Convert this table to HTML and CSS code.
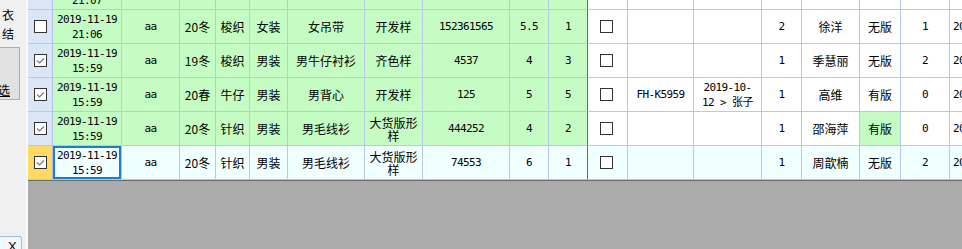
FILE: index.html
```html
<!DOCTYPE html>
<html lang="zh">
<head>
<meta charset="utf-8">
<title>grid</title>
<link rel="stylesheet" href="styles.css">
</head>
<body>
<div class="app">
  <aside class="side">
    <div class="lbl l1">衣</div>
    <div class="lbl l2">结</div>
    <div class="btn"><u>选</u></div>
    <div class="closebox">X</div>
  </aside>
  <div class="viewport">
    <div class="grid">
      <div class="row g">
        <div class="cell rh"></div>
        <div class="cell c1 m">2019-11-19<br>21:07</div>
        <div class="cell c2 m">aa</div>
        <div class="cell c3">20冬</div>
        <div class="cell c4">梭织</div>
        <div class="cell c5">女装</div>
        <div class="cell c6">女吊带</div>
        <div class="cell c7">开发样</div>
        <div class="cell c8 m">1523615</div>
        <div class="cell c9 m">5</div>
        <div class="cell c10 m fz">1</div>
        <div class="cell c11 w"></div>
        <div class="cell c12 w"></div>
        <div class="cell c13 w"></div>
        <div class="cell c14 w m">1</div>
        <div class="cell c15 w">徐洋</div>
        <div class="cell c16 w">无版</div>
        <div class="cell c17 w m">1</div>
        <div class="cell c18 w m">2019-11-19</div>
      </div>
      <div class="row g">
        <div class="cell rh"><svg class="cb" viewBox="0 0 13 13"><rect x="0.5" y="0.5" width="12" height="12"/></svg></div>
        <div class="cell c1 m">2019-11-19<br>21:06</div>
        <div class="cell c2 m">aa</div>
        <div class="cell c3">20冬</div>
        <div class="cell c4">梭织</div>
        <div class="cell c5">女装</div>
        <div class="cell c6">女吊带</div>
        <div class="cell c7">开发样</div>
        <div class="cell c8 m">152361565</div>
        <div class="cell c9 m">5.5</div>
        <div class="cell c10 m fz">1</div>
        <div class="cell c11 w"><svg class="cb" viewBox="0 0 13 13"><rect x="0.5" y="0.5" width="12" height="12"/></svg></div>
        <div class="cell c12 w"></div>
        <div class="cell c13 w"></div>
        <div class="cell c14 w m">2</div>
        <div class="cell c15 w">徐洋</div>
        <div class="cell c16 w">无版</div>
        <div class="cell c17 w m">1</div>
        <div class="cell c18 w m">2019-11-19</div>
      </div>
      <div class="row g">
        <div class="cell rh"><svg class="cb" viewBox="0 0 13 13"><rect x="0.5" y="0.5" width="12" height="12"/><path d="M3 6.5 5.5 9 10 4.5"/></svg></div>
        <div class="cell c1 m">2019-11-19<br>15:59</div>
        <div class="cell c2 m">aa</div>
        <div class="cell c3">19冬</div>
        <div class="cell c4">梭织</div>
        <div class="cell c5">男装</div>
        <div class="cell c6">男牛仔衬衫</div>
        <div class="cell c7">齐色样</div>
        <div class="cell c8 m">4537</div>
        <div class="cell c9 m">4</div>
        <div class="cell c10 m fz">3</div>
        <div class="cell c11 w"><svg class="cb" viewBox="0 0 13 13"><rect x="0.5" y="0.5" width="12" height="12"/></svg></div>
        <div class="cell c12 w"></div>
        <div class="cell c13 w"></div>
        <div class="cell c14 w m">1</div>
        <div class="cell c15 w">季慧丽</div>
        <div class="cell c16 w">无版</div>
        <div class="cell c17 w m">2</div>
        <div class="cell c18 w m">2019-11-19</div>
      </div>
      <div class="row g">
        <div class="cell rh"><svg class="cb" viewBox="0 0 13 13"><rect x="0.5" y="0.5" width="12" height="12"/><path d="M3 6.5 5.5 9 10 4.5"/></svg></div>
        <div class="cell c1 m">2019-11-19<br>15:59</div>
        <div class="cell c2 m">aa</div>
        <div class="cell c3">20春</div>
        <div class="cell c4">牛仔</div>
        <div class="cell c5">男装</div>
        <div class="cell c6">男背心</div>
        <div class="cell c7">开发样</div>
        <div class="cell c8 m">125</div>
        <div class="cell c9 m">5</div>
        <div class="cell c10 m fz">5</div>
        <div class="cell c11 w"><svg class="cb" viewBox="0 0 13 13"><rect x="0.5" y="0.5" width="12" height="12"/></svg></div>
        <div class="cell c12 w m">FH-K5959</div>
        <div class="cell c13 w m">2019-10-<br>12 &gt; 张子</div>
        <div class="cell c14 w m">1</div>
        <div class="cell c15 w">高维</div>
        <div class="cell c16 w">有版</div>
        <div class="cell c17 w m">0</div>
        <div class="cell c18 w m">2019-11-19</div>
      </div>
      <div class="row g">
        <div class="cell rh"><svg class="cb" viewBox="0 0 13 13"><rect x="0.5" y="0.5" width="12" height="12"/><path d="M3 6.5 5.5 9 10 4.5"/></svg></div>
        <div class="cell c1 m">2019-11-19<br>15:59</div>
        <div class="cell c2 m">aa</div>
        <div class="cell c3">20冬</div>
        <div class="cell c4">针织</div>
        <div class="cell c5">男装</div>
        <div class="cell c6">男毛线衫</div>
        <div class="cell c7">大货版形样</div>
        <div class="cell c8 m">444252</div>
        <div class="cell c9 m">4</div>
        <div class="cell c10 m fz">2</div>
        <div class="cell c11 w"><svg class="cb" viewBox="0 0 13 13"><rect x="0.5" y="0.5" width="12" height="12"/></svg></div>
        <div class="cell c12 w"></div>
        <div class="cell c13 w"></div>
        <div class="cell c14 w m">1</div>
        <div class="cell c15 w">邵海萍</div>
        <div class="cell c16 gr">有版</div>
        <div class="cell c17 w m">0</div>
        <div class="cell c18 w m">2019-11-19</div>
      </div>
      <div class="row a">
        <div class="cell rh cur"><svg class="cb" viewBox="0 0 13 13"><rect x="0.5" y="0.5" width="12" height="12"/><path d="M3 6.5 5.5 9 10 4.5"/></svg></div>
        <div class="cell c1 m sel">2019-11-19<br>15:59</div>
        <div class="cell c2 m">aa</div>
        <div class="cell c3">20冬</div>
        <div class="cell c4">针织</div>
        <div class="cell c5">男装</div>
        <div class="cell c6">男毛线衫</div>
        <div class="cell c7">大货版形样</div>
        <div class="cell c8 m">74553</div>
        <div class="cell c9 m">6</div>
        <div class="cell c10 m fz">1</div>
        <div class="cell c11"><svg class="cb" viewBox="0 0 13 13"><rect x="0.5" y="0.5" width="12" height="12"/></svg></div>
        <div class="cell c12"></div>
        <div class="cell c13"></div>
        <div class="cell c14 m">1</div>
        <div class="cell c15">周歆楠</div>
        <div class="cell c16">无版</div>
        <div class="cell c17 m">2</div>
        <div class="cell c18 m">2019-11-19</div>
      </div>
    </div>
  </div>
</div>
</body>
</html>
```

FILE: styles.css
```css
html, body {
  margin: 0;
  padding: 0;
  width: 962px;
  height: 249px;
  overflow: hidden;
  background: #ababab;
  font-family: "Noto Sans CJK SC", "Noto Sans", sans-serif;
  font-size: 12px;
  color: #000;
}

.app {
  display: flex;
  height: 249px;
}

.side {
  flex: none;
  width: 26px;
  border-right: 2px solid #f6f8fb;
  background: #f0f0f0;
  display: flex;
  flex-direction: column;
  padding-top: 5px;
  box-sizing: content-box;
}

.lbl {
  height: 19px;
  line-height: 19px;
  padding-left: 2px;
}

.btn {
  margin-top: 4px;
  width: 19px;
  height: 49px;
  border: 1px solid #adadad;
  border-left: none;
  background: #e1e1e1;
  display: flex;
  align-items: flex-end;
  line-height: 14px;
  padding-bottom: 2px;
  box-sizing: content-box;
  overflow: hidden;
}

.btn u {
  margin-left: -2px;
}

.closebox {
  margin-top: auto;
  width: 22px;
  height: 13px;
  border: 1px solid #9dbde6;
  border-left: none;
  border-bottom: none;
  border-radius: 0 3px 0 0;
  background: #f3f6fb;
  font-family: "Liberation Sans", sans-serif;
  font-size: 13px;
  line-height: 19px;
  padding-left: 8px;
  box-sizing: border-box;
  overflow: hidden;
}

.viewport {
  flex: 1;
  overflow: hidden;
  background: #ababab;
}

.grid {
  margin-top: -24px;
  width: 1100px;
  border-bottom: 1px solid #6d6d6d;
}

.row {
  display: flex;
  height: 34px;
}

.cell {
  flex: none;
  box-sizing: border-box;
  height: 34px;
  border-right: 1px solid #b7c9e8;
  border-bottom: 1px solid #b7c9e8;
  display: flex;
  align-items: center;
  justify-content: center;
  text-align: center;
  line-height: 13px;
  overflow: hidden;
  white-space: nowrap;
}

.row.g .cell { background: #c4fcc4; }
.row.g .cell.w { background: #ffffff; }
.row.g .cell.gr { background: #c4fcc4; }
.row.a .cell { background: #f0ffff; }

.row .cell.rh {
  width: 25px;
  background: #dae6f5;
  border-right-color: #b3bde6;
}

.row .cell.rh.cur { background: #ffd966; }

.m {
  font-family: "DejaVu Sans Mono", "Noto Sans CJK SC", monospace;
  font-size: 11px;
  letter-spacing: -0.62px;
  line-height: 15px;
}

.c1 { width: 69px; }
.c2 { width: 58px; }
.c3 { width: 36px; }
.c4 { width: 34px; }
.c5 { width: 38px; }
.c6 { width: 77px; }
.c7 { width: 58px; white-space: normal; }
.c8 { width: 87px; }
.c9 { width: 39px; }
.c10 { width: 39px; }
.c11 { width: 40px; }
.c12 { width: 66px; }
.c13 { width: 68px; }
.c14 { width: 40px; }
.c15 { width: 58px; }
.c16 { width: 41px; }
.c17 { width: 49px; }
.c18 { width: 200px; justify-content: flex-start; padding-left: 3px; }

.cell.fz { border-right-color: #6b6b6b; }

.cell.sel {
  box-shadow: inset 0 0 0 2px #1a7dd0;
}

.cb {
  width: 13px;
  height: 13px;
  display: block;
}

.cb rect {
  fill: #ffffff;
  stroke: #333333;
  stroke-width: 1;
}

.cb path {
  fill: none;
  stroke: #7a7a7a;
  stroke-width: 1.2;
}

.c11 .cb { margin-left: -2px; }
```
